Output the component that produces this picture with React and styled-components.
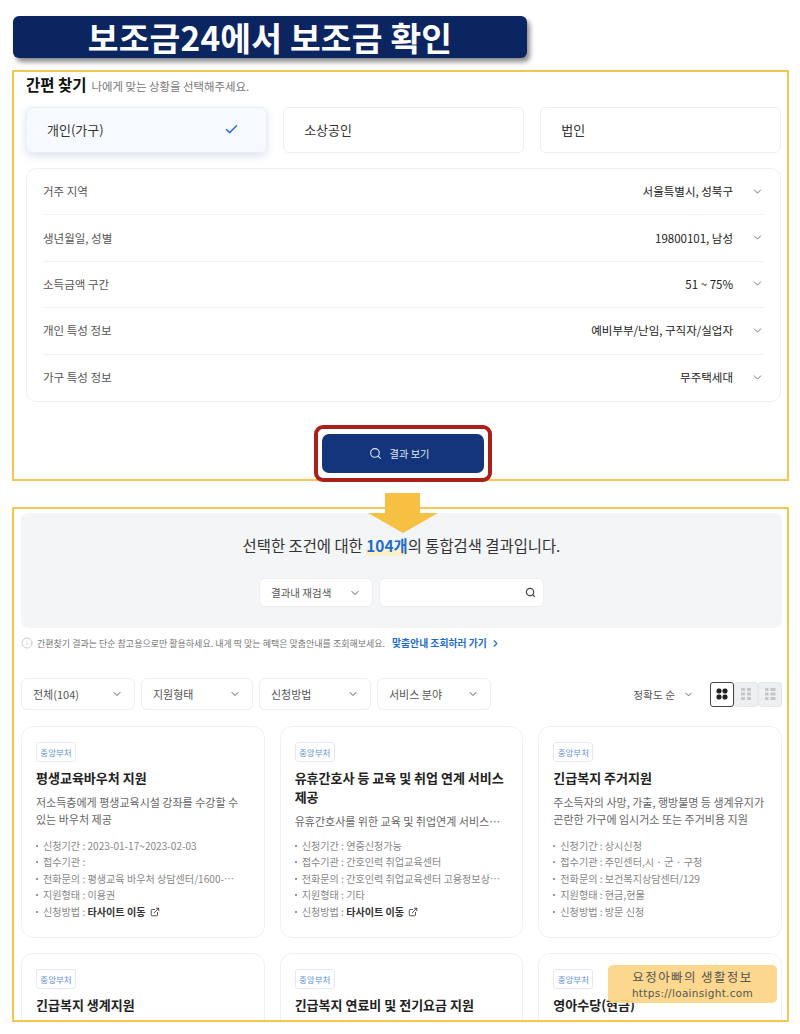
import styled, { createGlobalStyle } from "styled-components";
import { Check, ChevronDown, ChevronRight, ExternalLink, Info, Search } from "lucide-react";

const FORM_ROWS = [
  { label: "거주 지역", value: "서울특별시, 성북구" },
  { label: "생년월일, 성별", value: "19800101, 남성" },
  { label: "소득금액 구간", value: "51 ~ 75%" },
  { label: "개인 특성 정보", value: "예비부부/난임, 구직자/실업자" },
  { label: "가구 특성 정보", value: "무주택세대" },
];

const FILTERS = ["전체(104)", "지원형태", "신청방법", "서비스 분야"];

const CARDS = [
  {
    title: "평생교육바우처 지원",
    desc: "저소득층에게 평생교육시설 강좌를 수강할 수 있는 바우처 제공",
    items: ["신청기간 : 2023-01-17~2023-02-03", "접수기관 :", "전화문의 : 평생교육 바우처 상담센터/1600-⋯", "지원형태 : 이용권"],
    method: "타사이트 이동",
    external: true,
  },
  {
    title: "유휴간호사 등 교육 및 취업 연계 서비스 제공",
    desc: "유휴간호사를 위한 교육 및 취업연계 서비스⋯",
    items: ["신청기간 : 연중신청가능", "접수기관 : 간호인력 취업교육센터", "전화문의 : 간호인력 취업교육센터 고용정보상⋯", "지원형태 : 기타"],
    method: "타사이트 이동",
    external: true,
  },
  {
    title: "긴급복지 주거지원",
    desc: "주소득자의 사망, 가출, 행방불명 등 생계유지가 곤란한 가구에 임시거소 또는 주거비용 지원",
    items: ["신청기간 : 상시신청", "접수기관 : 주민센터,시 · 군 · 구청", "전화문의 : 보건복지상담센터/129", "지원형태 : 현금,현물", "신청방법 : 방문 신청"],
  },
  { title: "긴급복지 생계지원" },
  { title: "긴급복지 연료비 및 전기요금 지원" },
  { title: "영아수당(현금)" },
];

const GlobalStyle = createGlobalStyle`
  html, body { margin: 0; padding: 0; background: #fff; }
  body { font-family: "Noto Sans CJK KR", "Noto Sans", sans-serif; color: #222; }
  * { box-sizing: border-box; }
`;

const Page = styled.div`
  position: relative;
  width: 800px;
  height: 1034px;
  padding: 16px 11px 0 12px;
  overflow: hidden;
`;

const Banner = styled.h1`
  margin: 0 0 12px 1px;
  width: 514px;
  height: 42px;
  padding-bottom: 2px;
  display: flex;
  align-items: center;
  justify-content: center;
  background: #0b2560;
  border-radius: 6px;
  box-shadow: 3px 4px 5px rgba(0, 0, 0, 0.45);
  color: #fff;
  font-size: 33.4px;
  font-weight: 700;
  letter-spacing: 0.2px;
`;

const Frame = styled.section`
  border: 2px solid #f6c653;
  height: ${(p) => p.$height}px;
  margin-top: ${(p) => p.$top || 0}px;
  padding: ${(p) => p.$padding};
`;

const ClipFrame = styled(Frame)`
  overflow: hidden;
`;

const Heading = styled.div`
  display: flex;
  align-items: baseline;
  gap: 5px;
  height: 35px;
`;

const HeadingTitle = styled.strong`
  font-size: 15.5px;
  font-weight: 700;
  color: #111;
  line-height: 24px;
`;

const HeadingNote = styled.span`
  font-size: 11.4px;
  color: #777;
`;

const Tabs = styled.div`
  display: grid;
  grid-template-columns: repeat(3, 1fr);
  gap: 16.5px;
`;

const Tab = styled.div`
  height: 46px;
  padding: 0 27px 2px 20px;
  display: flex;
  align-items: center;
  justify-content: space-between;
  font-size: 13px;
  color: #333;
  border-radius: 6px;
  border: 1px solid ${(p) => (p.$active ? "#e8eef7" : "#eceef1")};
  background: ${(p) => (p.$active ? "#f6f9fd" : "#fff")};
  box-shadow: ${(p) => (p.$active ? "0 3px 8px rgba(60, 90, 150, 0.18)" : "none")};
`;

const FormPanel = styled.div`
  margin-top: 15px;
  height: 234px;
  padding: 0 16px;
  border: 1px solid #edeff2;
  border-radius: 10px;
  display: grid;
  grid-template-rows: repeat(5, 1fr);
`;

const FormRow = styled.div`
  display: flex;
  align-items: center;
  justify-content: space-between;
  padding-bottom: 1px;
  border-bottom: 1px solid #f0f1f3;
  font-size: 11.5px;
  &:last-child { border-bottom: 0; }
`;

const FormLabel = styled.span`
  color: #555;
`;

const FormValue = styled.span`
  display: flex;
  align-items: center;
  gap: 18px;
  color: #222;
  & svg { color: #555; }
`;

const ButtonRing = styled.div`
  position: relative;
  width: 178px;
  height: 57px;
  margin: 23px 0 0 288px;
  padding: 5px 4px;
  display: flex;
  background: #fff;
  border: 4px solid #a9201b;
  border-radius: 9px;
`;

const ResultButton = styled.button`
  flex: 1;
  border: 0;
  padding: 0 8px 0 0;
  border-radius: 7px;
  background: #12357b;
  color: #dfe6f3;
  font-family: inherit;
  font-size: 10.2px;
  display: flex;
  align-items: center;
  justify-content: center;
  gap: 8px;
`;

const Arrow = styled.svg`
  position: absolute;
  left: 368px;
  top: 493px;
`;

const SearchPanel = styled.div`
  height: 115px;
  background: #f4f5f6;
  border-radius: 8px;
  display: flex;
  flex-direction: column;
  align-items: center;
  padding-top: 20px;
`;

const ResultTitle = styled.p`
  margin: 0;
  font-size: 15.4px;
  line-height: 24px;
  color: #333;
`;

const Count = styled.b`
  color: #1c6cd0;
  font-weight: 700;
  background: linear-gradient(transparent 62%, #fbf1c4 62%);
`;

const SearchRow = styled.div`
  display: flex;
  gap: 6px;
  margin-top: 21px;
`;

const SelectBox = styled.div`
  height: ${(p) => p.$height}px;
  width: ${(p) => p.$width}px;
  padding: 0 ${(p) => p.$right || 11}px 0 11px;
  display: flex;
  align-items: center;
  justify-content: space-between;
  background: #fff;
  border: 1px solid #eceef1;
  border-radius: 6px;
  font-size: ${(p) => p.$size || 11}px;
  color: #555;
  & svg { color: #444; }
`;

const InfoNote = styled.div`
  display: flex;
  align-items: center;
  gap: 4px;
  height: 16px;
  margin-top: 7px;
  font-size: 9px;
  color: #777;
`;

const InfoIcon = styled(Info)`
  color: #aaa;
`;

const InfoLink = styled.a`
  display: inline-flex;
  align-items: center;
  gap: 3px;
  margin-left: 3px;
  font-size: 9.8px;
  font-weight: 700;
  color: #1c6cd0;
`;

const Toolbar = styled.div`
  display: flex;
  align-items: center;
  margin-top: 27px;
`;

const Filters = styled.div`
  display: flex;
  gap: 6px;
`;

const SortBox = styled.div`
  margin-left: auto;
  display: flex;
  align-items: center;
  gap: 8px;
  font-size: 10.7px;
  color: #555;
`;

const ViewToggle = styled.div`
  display: flex;
  margin-left: 16px;
  height: 25px;
`;

const ViewButton = styled.div`
  width: 24px;
  display: flex;
  align-items: center;
  justify-content: center;
  background: ${(p) => (p.$active ? "#fff" : "#eeeff1")};
  border: 1px solid ${(p) => (p.$active ? "#444" : "#e6e7ea")};
  border-radius: 3px;
  color: ${(p) => (p.$active ? "#222" : "#c4c6ca")};
`;

const CardGrid = styled.div`
  display: grid;
  grid-template-columns: repeat(3, 1fr);
  gap: 15px;
  margin-top: 16px;
`;

const Card = styled.article`
  height: 212px;
  padding: 15px 14px 17px;
  border: 1px solid #eef0f3;
  border-radius: 12px;
  display: flex;
  flex-direction: column;
`;

const Tag = styled.span`
  align-self: flex-start;
  width: 40px;
  height: 20px;
  display: flex;
  align-items: center;
  justify-content: center;
  border: 1px solid #e1e8f4;
  border-radius: 3px;
  font-size: 8.5px;
  color: #5d90dc;
`;

const CardTitle = styled.h3`
  margin: 6px 0 0;
  font-size: 13px;
  line-height: 19px;
  font-weight: 700;
  color: #222;
`;

const CardDesc = styled.p`
  margin: 7px 0 0;
  font-size: 11px;
  line-height: 16.5px;
  color: #666;
`;

const DetailList = styled.ul`
  list-style: none;
  margin: auto 0 0;
  padding: 0;
`;

const DetailItem = styled.li`
  position: relative;
  padding-left: 7px;
  font-size: 10.1px;
  line-height: 16.4px;
  white-space: nowrap;
  color: #888;
  &::before {
    content: "";
    position: absolute;
    left: 0;
    top: 7px;
    width: 2px;
    height: 2px;
    border-radius: 50%;
    background: #777;
  }
`;

const SiteLink = styled.b`
  display: inline-flex;
  align-items: center;
  gap: 4px;
  font-weight: 700;
  color: #333;
`;

const Watermark = styled.div`
  position: absolute;
  left: 608px;
  top: 965px;
  width: 169px;
  height: 38px;
  display: flex;
  flex-direction: column;
  align-items: center;
  justify-content: center;
  background: rgba(251, 214, 135, 0.95);
  border-radius: 5px;
  color: #555;
`;

const WatermarkName = styled.span`
  font-size: 12.5px;
  line-height: 18px;
  letter-spacing: 1.4px;
`;

const WatermarkUrl = styled.span`
  font-family: "DejaVu Sans", sans-serif;
  font-size: 10.5px;
  line-height: 15px;
  letter-spacing: 0.3px;
`;

function GridIcon({ variant }) {
  const cells = [];
  if (variant === "large") {
    [1.5, 7.5].forEach((y) => [1.5, 7.5].forEach((x) => cells.push([x, y, 5, 5, 2])));
  } else if (variant === "small") {
    [1, 5.5, 10].forEach((y) => [2, 8].forEach((x) => cells.push([x, y, 4, 3, 0.6])));
  } else {
    [1, 5.5, 10].forEach((y) => {
      cells.push([2, y, 3.5, 3, 0.6]);
      cells.push([7.5, y, 5, 3, 0.6]);
    });
  }
  return (
    <svg width="14" height="14" viewBox="0 0 14 14" fill="currentColor">
      {cells.map(([x, y, w, h, r]) => (
        <rect key={`${x}-${y}`} x={x} y={y} width={w} height={h} rx={r} />
      ))}
    </svg>
  );
}

export default function App() {
  return (
    <Page>
      <GlobalStyle />
      <Banner>보조금24에서 보조금 확인</Banner>

      <Frame $height={411} $padding="0 6px 0 12px">
        <Heading>
          <HeadingTitle>간편 찾기</HeadingTitle>
          <HeadingNote>나에게 맞는 상황을 선택해주세요.</HeadingNote>
        </Heading>
        <Tabs>
          <Tab $active>
            개인(가구)
            <Check size={15} color="#2b6fd8" strokeWidth={2.4} />
          </Tab>
          <Tab>소상공인</Tab>
          <Tab>법인</Tab>
        </Tabs>
        <FormPanel>
          {FORM_ROWS.map(({ label, value }) => (
            <FormRow key={label}>
              <FormLabel>{label}</FormLabel>
              <FormValue>
                {value}
                <ChevronDown size={13} strokeWidth={1.5} />
              </FormValue>
            </FormRow>
          ))}
        </FormPanel>
        <ButtonRing>
          <ResultButton>
            <Search size={13} strokeWidth={2} />
            결과 보기
          </ResultButton>
        </ButtonRing>
      </Frame>

      <ClipFrame $height={515} $top={26} $padding="4px 5px 0 7px">
        <SearchPanel>
          <ResultTitle>
            선택한 조건에 대한 <Count>104개</Count>의 통합검색 결과입니다.
          </ResultTitle>
          <SearchRow>
            <SelectBox $width={114} $height={29} $size={10.5}>
              결과내 재검색
              <ChevronDown size={12} strokeWidth={1.8} />
            </SelectBox>
            <SelectBox $width={165} $height={29} $right={7}>
              <span />
              <Search size={11} strokeWidth={2.6} />
            </SelectBox>
          </SearchRow>
        </SearchPanel>

        <InfoNote>
          <InfoIcon size={12} strokeWidth={1.2} />
          간편찾기 결과는 단순 참고용으로만 활용하세요. 내게 딱 맞는 혜택은 맞춤안내를 조회해보세요.
          <InfoLink>
            맞춤안내 조회하러 가기
            <ChevronRight size={11} strokeWidth={2.4} />
          </InfoLink>
        </InfoNote>

        <Toolbar>
          <Filters>
            {FILTERS.map((name, i) => (
              <SelectBox key={name} $width={i === 0 ? 114 : i === 3 ? 114 : 112} $height={32}>
                {name}
                <ChevronDown size={12} strokeWidth={1.8} />
              </SelectBox>
            ))}
          </Filters>
          <SortBox>
            정확도 순
            <ChevronDown size={11} strokeWidth={1.8} />
          </SortBox>
          <ViewToggle>
            <ViewButton $active>
              <GridIcon variant="large" />
            </ViewButton>
            <ViewButton>
              <GridIcon variant="small" />
            </ViewButton>
            <ViewButton>
              <GridIcon variant="mixed" />
            </ViewButton>
          </ViewToggle>
        </Toolbar>

        <CardGrid>
          {CARDS.map(({ title, desc, items, method, external }) => (
            <Card key={title}>
              <Tag>중앙부처</Tag>
              <CardTitle>{title}</CardTitle>
              {desc && <CardDesc>{desc}</CardDesc>}
              {items && (
                <DetailList>
                  {items.map((item) => (
                    <DetailItem key={item}>{item}</DetailItem>
                  ))}
                  {external && (
                    <DetailItem>
                      신청방법 : <SiteLink>{method}<ExternalLink size={10} strokeWidth={2} /></SiteLink>
                    </DetailItem>
                  )}
                </DetailList>
              )}
            </Card>
          ))}
        </CardGrid>
      </ClipFrame>

      <Arrow width="70" height="40" viewBox="0 0 70 40">
        <polygon points="17,0 52,0 52,20 70,20 35,40 0,20 17,20" fill="#f6c042" />
      </Arrow>

      <Watermark>
        <WatermarkName>요정아빠의 생활정보</WatermarkName>
        <WatermarkUrl>https://loainsight.com</WatermarkUrl>
      </Watermark>
    </Page>
  );
}
